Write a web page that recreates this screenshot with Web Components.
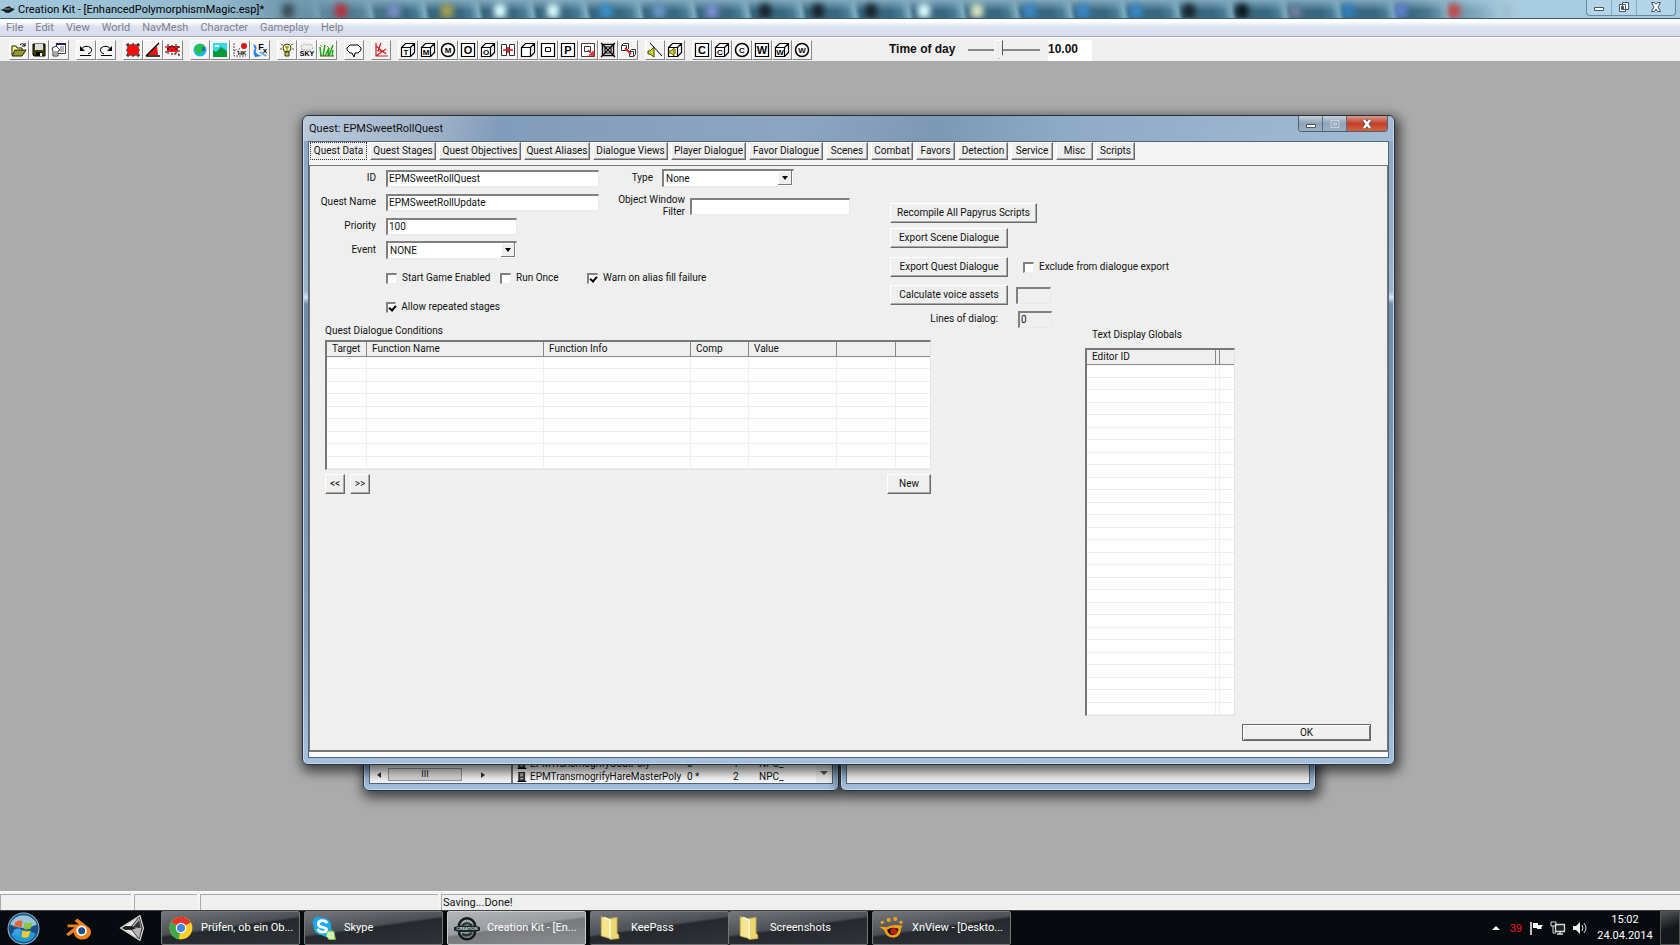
<!DOCTYPE html>
<html lang="en">
<head>
<meta charset="utf-8">
<title>Creation Kit - [EnhancedPolymorphismMagic.esp]*</title>
<style>
    html, body { height: 100%; }

    body {
        margin: 0;
        overflow: hidden;
        color: #111;
        --ui: Roboto, "Liberation Sans", Arial, sans-serif;
        --segoe: Roboto, "Noto Sans", sans-serif;
        font: 10px/12px var(--ui);
    }
</style>
</head>
<body>
<ck-app></ck-app>

<script>
// Shared by every element: builds the shadow root out of an HTML string.
class CkElement extends HTMLElement {
    constructor() {
        super()
        this.shadow = this.attachShadow({ mode: 'open' })
    }

    connectedCallback() {
        var template = document.createElement('template')
        template.innerHTML = '<style>*{box-sizing:border-box}</style>' + this.render()
        this.shadow.replaceChildren(template.content.cloneNode(true))
    }

    attr(name, fallback = '') {
        return this.getAttribute(name) ?? fallback
    }
}

// ---------------------------------------------------------------- icons

var letter = (char, x, y, size = 8) =>
    `<text x="${x}" y="${y}" font-size="${size}" font-weight="700" text-anchor="middle" fill="#000" stroke="none" font-family="Liberation Sans">${char}</text>`
var cube = (char = '') =>
    `<path d="M1.5 5.5h9v9h-9zM1.5 5.5l4-4h9v9l-4 4M10.5 5.5l4-4" fill="#fff" stroke="#000" stroke-width="1.2"/>${letter(char, 6, 13)}`
var box = (char) =>
    `<path d="M1.5 1.5h13v13h-13z" fill="#fff" stroke="#000" stroke-width="1.2"/>${letter(char, 8, 12, 11)}`
var ring = (char) =>
    `<circle cx="8" cy="8" r="6.5" fill="#fff" stroke="#000" stroke-width="1.5"/>${letter(char, 8, 11)}`

var icons = {
    open: '<path d="M1 13V4h4l1 2h5v2" fill="#ff9" stroke="#220"/><path d="M1 14l3-6h11l-4 6z" fill="#993" stroke="#220"/><path d="M9 3q3-3 5 1M14 1v3h-3" fill="none" stroke="#000"/>',
    save: '<path d="M2 2h12v12H3l-1-1z" fill="#440" stroke="#000"/><path d="M4 2h8v6H4z" fill="#ddd"/><path d="M5 10h6v4H5z" fill="#000"/><path d="M9 11h2v3H9z" fill="#eee"/>',
    props: '<path d="M5.5 1.500h9v10h-9z" fill="#fff" stroke="#444"/><path d="M5 1h10v2H5z" fill="#226"/><path d="M9 5h4M9 7h4M9 9h4" stroke="#666"/><path d="M1 6l4-2 4 4-2 1v5H2V9z" fill="#fff" stroke="#333"/><path d="M3 10h3M3 12h3" stroke="#555"/>',
    undo: '<path d="M3 7q5-5 10-1 2 4-3 6" fill="none" stroke="#000"/><path d="M2 4v5h5zM2 13h11v1H2z" fill="#000"/>',
    redo: '<path d="M13 7q-5-5-10-1-2 4 3 6" fill="none" stroke="#000"/><path d="M14 4v5H9zM3 13h11v1H3z" fill="#000"/>',
    snapGrid: '<path d="M3 1v14M8 1v14M13 1v14M1 3h14M1 8h14M1 13h14" stroke="#000"/><path d="M4 3h8l2 4-1 6H3L2 6z" fill="#f01010"/>',
    snapAngle: '<path d="M2 13L12 4l1 9z" fill="#f01010"/><path d="M1 14L14 1M1 14h14" stroke="#000" stroke-width="1.4"/>',
    snapRef: '<path d="M2 4h11v6H2z" fill="#f01818"/><path d="M0 5h16M3 2v12M7 3v11M11 2v12M14 4v10M0 10h4M9 12h5" stroke="#200" stroke-dasharray="2 2"/>',
    world: '<circle cx="8" cy="8" r="6.5" fill="#18b8d8"/><path d="M3 4q5-3 9-1l1 4-4 4-3 1-3-4z" fill="#28c040"/><path d="M10 5h3v4h-3z" fill="#3860c0"/>',
    land: '<path d="M1 1h14v14H1z" fill="#38d8e8"/><path d="M1 8l3 2 5-5 6 4v6H1z" fill="#089838"/><path d="M3 3h4v2H3z" fill="#fff"/>',
    havok: '<path d="M2 1v13h12M2 9l3-2M5 10l3-4" fill="none" stroke="#555" stroke-dasharray="2 1"/><circle cx="12" cy="4" r="3" fill="#d81818"/>' + letter('HK', 10, 13, 6),
    fx: '<path d="M1 2q5 2 3 6t6 6l-7 1q-3-6 0-8z" fill="#2080e8"/><path d="M8 10l6 4" stroke="#58a8f0" stroke-width="2"/>' + letter('F', 9, 8, 9) + letter('x', 13, 11, 8),
    light: '<circle cx="8" cy="6" r="4" fill="#ffffa0" stroke="#333"/><path d="M6 10h4v4H6z" fill="#cc3" stroke="#333"/><path d="M6 5h4M8 5v4M2 2l2 1M14 2l-2 1M1 7h2M13 7h2" stroke="#661"/>',
    sky: '<path d="M2 5q2-5 6-2 5-2 6 3l-2 2H3z" fill="#eee" stroke="#aaa" stroke-dasharray="2 1"/>' + letter('SKY', 8, 14, 7),
    grass: '<path d="M2 14L1 5M4 14L6 3M6 14l4-8M9 14l1-8M10 14l4-11M13 14l1-6" stroke="#18a818" stroke-width="1.5"/><path d="M1 14h14" stroke="#652"/><path d="M8 4l3 3M3 5l-2-2" stroke="#c83"/>',
    speech: '<path d="M4 3h8l3 3v2l-3 3H9l-1 4-2-4H4L1 8V6z" fill="#fff" stroke="#000"/>',
    graph: '<path d="M3 1v13h12M3 14L13 7M3 4l10 8M8 1l-3 8h6" fill="none" stroke="#c82020" stroke-width="1.2"/>',
    cubeT: cube('T'), cubeM: cube('M'), ringM: ring('M'), boxO: box('O'), cubeO: cube('O'),
    portalLink: '<path d="M1.500 2.500h5v11h-5zM9.500 2.500h5v11h-5z" fill="#fff" stroke="#333"/><path d="M3 8h10M8 5v6" stroke="#e01010" stroke-width="1.600"/>',
    cube: cube(),
    boxBox: '<path d="M1.500 1.500h13v13h-13z" fill="#fff" stroke="#000" stroke-width="1.200"/><path d="M5.500 5.500h5v4h-5z" fill="none" stroke="#000"/>',
    boxP: box('P'),
    boxRed: '<path d="M1.500 1.500h13v13h-13z" fill="#fff" stroke="#533"/><path d="M4.500 4.500h6v5h-6z" fill="none" stroke="#333"/><path d="M8 8l6 6M9 13h4V9" fill="none" stroke="#e02020" stroke-width="1.500"/>',
    boxX: '<path d="M2.500 2.500h11v11h-11z" fill="#fff" stroke="#000" stroke-width="1.500"/><path d="M1 1l14 14M15 1L1 15M5 5h6v6H5z" fill="none" stroke="#000" stroke-width="1.200"/><path d="M11 9l3 4" stroke="#c22"/>',
    linkCubes: '<path d="M1.500 3.500h5v5h-5zM1.500 3.500l2-2h5v5l-2 2M9.500 9.500h4v5h-4zM9.500 9.500l2-2h4v5l-2 2" fill="#fff" stroke="#333"/><path d="M5 6l6 6" stroke="#e02020" stroke-width="1.800"/>',
    sound: '<path d="M3 1l12 13" stroke="#000"/><path d="M1 9h2l4-4v10l-4-3H1z" fill="#d8d820" stroke="#440"/>',
    cubeSound: cube() + '<path d="M2 9h2l3-3v8l-3-3H2zM8 7v5" fill="#d8d820" stroke="#660"/>',
    boxC: box('C'), cubeC: cube('C'), ringC: ring('C'), boxW: box('W'), cubeW: cube('W'), ringW: ring('W'),

    kit: '<path d="M0 9l4-1 2-2 4-1 2 2 4 1-3 2-3 2H6l-2-2z" fill="#151a1c"/><path d="M5 8h6" stroke="#9bb"/>',
    list: '<path d="M2 0h11v16H2z" fill="#333"/><path d="M5 2h5v5H5zM5 9h5v3H5z" fill="#aaa"/><path d="M1 15h14" stroke="#000" stroke-width="2"/>',
    start: '<circle cx="16" cy="16" r="15" fill="#174f86" stroke="#8ab6cc"/><path d="M3 12a14 14 0 0 1 26 0q-13 7-26 0z" fill="#9cc4d8"/><path d="M4 21a13 13 0 0 0 24 0q-12-7-24 0z" fill="#1f9ad8"/><path d="M8 10q4-3 7-1l-1 6q-3-2-7 0z" fill="#e8602c"/><path d="M17 10q4 2 8 0l-2 6q-4 2-7 0z" fill="#8cc63c"/><path d="M7 17q4-2 7 0l-2 6q-3-2-7 0z" fill="#3aa0e8"/><path d="M15 18q4 2 8 0l-2 6q-4 2-7 0z" fill="#fcc82c"/>',
    blender: '<path d="M1 23l10-8H3v-3h13l-5-4 3-3 13 10q4 4 2 9-4 6-11 5-7-1-8-8l-6 4z" fill="#f0821e"/><circle cx="19" cy="19" r="6" fill="#fff"/><circle cx="19" cy="19" r="4" fill="#1c4f8c"/>',
    unity: '<path d="M3 16L25 2l4 14-4 14z" fill="#1a1a1a" stroke="#ddd" stroke-width="1.500"/><path d="M4 16l19-12-8 10h-7zM4 16l19 12-8-10h-7z" fill="#eee"/><path d="M16 14l8-10 3 12-3 12-8-10 5-2z" fill="#b4b4b4"/><path d="M8 14h8l-2 2 2 2H8z" fill="#222"/><path d="M17 15l7-8 2 9z" fill="#333"/>',
    chrome: '<circle cx="16" cy="16" r="14" fill="#fcd02c"/><path d="M16 16L4 9a14 14 0 0 1 24 0z" fill="#e0362c"/><path d="M16 16l-3 14A14 14 0 0 1 4 9z" fill="#3ea848"/><circle cx="16" cy="16" r="6.500" fill="#fff"/><circle cx="16" cy="16" r="5" fill="#4488e0"/>',
    skype: '<circle cx="14" cy="14" r="11" fill="#18aae8"/><circle cx="9" cy="9" r="7" fill="#18aae8"/><circle cx="19" cy="20" r="7" fill="#18aae8"/><path d="M20 10q-2-3-6-3-5 0-5 4 0 3 5 4t5 3q0 3-5 3-4 0-6-4" fill="none" stroke="#fff" stroke-width="3.500"/><path d="M20 20h8l2 10h-8l-3-4z" fill="#d6f0b0" stroke="#8c4"/>',
    creation: '<path d="M6 14a10 10 0 0 1 20 0M6 20a10 10 0 0 0 20 0" fill="none" stroke="#101818" stroke-width="3"/><path d="M10 13q6-6 12 0M10 23q6 4 12-1" fill="none" stroke="#243434" stroke-width="3"/><path d="M0 15l6-2h20l6 2v4l-6 2H6l-6-2z" fill="#1a2626"/><text x="16" y="19" font-size="5" font-weight="700" fill="#cfe0e0" text-anchor="middle" font-family="Liberation Sans">CREATION</text>',
    folder: '<path d="M6 3l10 3v22l-10-3z" fill="#f4e48c" stroke="#cdb050"/><path d="M16 5l8-1v18l2 2v4l-10 1z" fill="#ecd670" stroke="#c8a848"/><path d="M9 4l7 3v21" fill="none" stroke="#fffbd0" stroke-width="2"/>',
    xnview: '<path d="M0 14l9 1q8-4 20-2l-2 4q0 10-9 11-9 0-11-8-3-4-7-6z" fill="#f0a018"/><path d="M10 18q6-4 14-1-1 7-7 8-6-1-7-7z" fill="#200a06"/><circle cx="18" cy="20" r="4" fill="#b82414"/><circle cx="4" cy="9" r="2" fill="#f0a018"/><circle cx="12" cy="6" r="2.500" fill="#f0a018"/><circle cx="20" cy="5" r="2.500" fill="#f0a018"/><circle cx="27" cy="9" r="2" fill="#f0a018"/>',
    up: '<path d="M4 10l4-4 4 4z" fill="#fff"/>',
    flag: '<path d="M3 2v13" stroke="#fff" stroke-width="1.500"/><path d="M5 3h5v2h5l-2 3 1 1H9V8H5z" fill="#fff"/>',
    network: '<path d="M5.500 4.500h9v7h-9zM7 14h6M10 12v2" fill="#222" stroke="#ddd" stroke-width="1.300"/><path d="M1 2h5v4H1zM3 6v7h3" fill="none" stroke="#ddd"/>',
    volume: '<path d="M1 6h3l4-4v12l-4-4H1z" fill="#eee"/><path d="M10 5q2 3 0 6M12 3q4 5 0 10" fill="none" stroke="#ddd"/>',
}

class CkIcon extends CkElement {
    render() {
        var size = this.attr('box', '16')
        return `
<style>
    :host { display: block; flex: none; width: 16px; height: 16px; }
    svg { display: block; width: 100%; height: 100%; }
</style>
<svg viewBox="0 0 ${size} ${size}" aria-hidden="true">${icons[this.attr('name')]}</svg>`
    }
}

// ---------------------------------------------------------------- form controls

class CkButton extends CkElement {
    render() {
        return `
<style>
    :host { display: block; flex: none; }
    button {
        display: block;
        width: 100%;
        height: 20px;
        padding: 0;
        font: inherit;
        color: inherit;
        background: #efefef;
        border: 1px solid;
        border-color: #fff #696969 #696969 #fff;
        box-shadow: inset -1px -1px #a9a9a9;
        white-space: nowrap;
    }
    :host([default]) button { height: 17px; border: 1px solid #666; box-shadow: inset 1px 1px #fff, inset -1px -1px #777; }
    :host([tab]) button { height: 18px; }
    :host([selected]) button { border: 1px dotted #333; box-shadow: none; }
</style>
<button type="button"><slot></slot></button>`
    }
}

var sunken = `
    font: inherit;
    color: inherit;
    width: 100%;
    height: 17px;
    margin: 0;
    padding: 0 1px;
    background: #fff;
    border: solid;
    border-width: 2px 1px 1px 2px;
    border-color: #808080 #e8e8e8 #e8e8e8 #808080;
    border-radius: 0;
    outline: none;`

class CkField extends CkElement {
    render() {
        return `
<style>
    :host { display: flex; align-items: center; gap: 10px; height: 16px; }
    label { flex: none; width: var(--label, 66px); text-align: right; }
    div { position: relative; width: var(--control, 213px); }
    input, select { ${sunken} display: block; }
    select { appearance: none; height: 18px; padding-left: 2px; }
    input:read-only { background: #efefef; }
    /* drop-down button lies over the end of the select */
    i {
        position: absolute;
        inset: 2px 2px 2px auto;
        display: grid;
        place-items: center;
        width: 14px;
        background: #efefef;
        box-shadow: inset -1px -1px #777, inset 1px 1px #fff;
        pointer-events: none;
    }
    i::after { content: ""; border: 3px solid transparent; border-top: 4px solid #000; border-bottom: 0; }
</style>
<label for="control"><slot></slot></label>
<div>${this.control()}</div>`
    }

    control() {
        if (this.hasAttribute('select')) {
            return `<select id="control"><option>${this.attr('value')}</option></select><i></i>`
        }
        return `<input id="control" type="text" value="${this.attr('value')}" ${this.hasAttribute('readonly') ? 'readonly' : ''}>`
    }
}

class CkCheck extends CkElement {
    render() {
        return `
<style>
    :host { display: block; }
    label { display: flex; align-items: center; gap: 5px; white-space: nowrap; }
    input {
        appearance: none;
        display: grid;
        width: 11px;
        height: 11px;
        margin: 0;
        background: #fff;
        border: solid;
        border-width: 2px 1px 1px 2px;
        border-color: #808080 #eee #eee #808080;
    }
    input:checked::after {
        content: "";
        width: 3px;
        height: 5px;
        margin: 0 0 0 2px;
        border: solid #000;
        border-width: 0 2px 2px 0;
        rotate: 40deg;
    }
</style>
<label><input type="checkbox" ${this.hasAttribute('checked') ? 'checked' : ''}><slot></slot></label>`
    }
}

// columns="Title:width,Title:width" rows="n"
class CkList extends CkElement {
    render() {
        var columns = this.attr('columns').split(',').map((column) => column.split(':'))
        var cells = '<td></td>'.repeat(columns.length)
        return `
<style>
    :host { display: block; overflow: hidden; background: #fff; border: solid; border-width: 2px 1px 1px 2px; border-color: #777 #e4e4e4 #e4e4e4 #777; }
    table { width: 100%; height: 100%; table-layout: fixed; border-spacing: 0; }
    th {
        height: 15px;
        padding: 0 5px;
        font-weight: 400;
        text-align: left;
        white-space: nowrap;
        background: #efefef;
        border-right: 1px solid #888;
        border-bottom: 1px solid #888;
    }
    td { padding: 0; border-right: 1px solid #eee; border-bottom: 1px solid #eee; }
    th:last-child, td:last-child { border-right: 0; }
</style>
<table aria-label="${this.attr('label')}">
    <colgroup>${columns.map(([, width]) => `<col style="width:${width ? width + 'px' : 'auto'}">`).join('')}</colgroup>
    <thead><tr>${columns.map(([title]) => `<th>${title}</th>`).join('')}</tr></thead>
    <tbody>${`<tr>${cells}</tr>`.repeat(Number(this.attr('rows')))}</tbody>
</table>`
    }
}

// ---------------------------------------------------------------- windows

class CkWindow extends CkElement {
    render() {
        return `
<style>
    :host {
        display: flex;
        flex-direction: column;
        padding: 0 5px 6px;
        background: linear-gradient(#8ba5c2, #9cb4cc 27%, #d4e4f0 28%, #6f8cab 29%, #86a2c0 80%, #a4c0de);
        border: 1px solid #26323e;
        border-radius: 6px;
        box-shadow: inset 0 0 0 1px #c4d8ea, 2px 4px 12px 3px #0009;
    }
    header {
        display: flex;
        flex: none;
        height: 25px;
        justify-content: space-between;
        font: 11px/26px var(--segoe);
        margin: 0 -4px;
        padding-left: 5px;
        background: linear-gradient(100deg, #b9c9da, #a0b3c8 12%, #819cba 18%, #8ca6c2 45%, #7d98b5 58%, #8faac7 70%, #a3bcd4);
        border-radius: 5px 5px 0 0;
    }
    nav { display: flex; height: 16px; margin-right: 5px; border: 1px solid #4c5e70; border-top: 0; border-radius: 0 0 4px 4px; overflow: hidden; }
    button { display: grid; place-items: center; width: 24px; padding: 0; border: 0; border-right: 1px solid #5a6c7e; background: linear-gradient(#c5d2de, #8fa2b6 50%, #9fb2c5); }
    button:last-child { width: 40px; border: 0; background: linear-gradient(#d99a8c, #c0402c 50%, #d8603c); }
    svg { width: 12px; height: 10px; }
    main { flex: 1; min-height: 0; display: flex; flex-direction: column; background: #efefef; border: 1px solid #52667a; overflow: hidden; }
</style>
<header><span>${this.attr('caption')}</span>${this.hasAttribute('plain') ? '' : `<nav>
    <button aria-label="Minimize"><svg viewBox="0 0 12 10"><path d="M1.500 5.500h9v3h-9z" fill="#fff" stroke="#456"/></svg></button>
    <button aria-label="Maximize"><svg viewBox="0 0 12 10"><path d="M2 1.500h8v7H2zM4.500 4h3v2h-3z" fill="none" stroke="#c8d4e0"/></svg></button>
    <button aria-label="Close"><svg viewBox="0 0 12 10"><path d="M3 1l6 8M9 1L3 9" stroke="#545" stroke-width="4"/><path d="M3 1l6 8M9 1L3 9" stroke="#fff" stroke-width="2.500"/></svg></button>
</nav>`}</header>
<main><slot></slot></main>`
    }
}

class CkQuestForm extends CkElement {
    render() {
        var tabs = {
            'Quest Data': 57, 'Quest Stages': 66, 'Quest Objectives': 82, 'Quest Aliases': 66, 'Dialogue Views': 75,
            'Player Dialogue': 75, 'Favor Dialogue': 74, 'Scenes': 42, 'Combat': 42, 'Favors': 39, 'Detection': 50,
            'Service': 42, 'Misc': 37, 'Scripts': 39,
        }
        return `
<style>
    :host { display: flex; flex-direction: column; flex: 1; background: #fafafa; }
    .tabs { display: flex; gap: 3px; height: 23px; padding-left: 1px; background: #f4f4f4; }
    .panel { flex: 1; margin-bottom: 5px; padding: 4px 0; background: #efefef; border: 1px solid #777; border-width: 1px 1px 2px; }
    .top { display: flex; gap: 40px; height: 155px; }
    .columns { display: flex; gap: 16px; height: 102px; }
    .fields { display: grid; grid-auto-rows: 16px; gap: 8px; align-content: start; }
    .short { --control: 131px; }
    .side { --label: 40px; --control: 132px; display: flex; flex-direction: column; gap: 10px; }
    .side ck-field:first-child { gap: 9px; --label: 38px; }
    .filter { --label: 70px; --control: 160px; gap: 5px; height: 20px; }
    .checks { display: flex; margin-left: 76px; height: 29px; }
    .checks ck-check:nth-child(1) { width: 114px; }
    .checks ck-check:nth-child(2) { width: 87px; }
    .exports { display: grid; grid-template-rows: 25px 29px 28px 24px 20px; align-content: start; padding-top: 33px; }
    .exports > div { display: flex; align-items: center; height: 20px; }
    .exports ck-button { width: 118px; }
    .exports ck-button.wide { width: 147px; }
    .exports ck-check { margin-left: 15px; }
    .exports ck-field { --label: 0px; --control: 35px; gap: 8px; }
    .exports .lines { --label: 108px; --control: 34px; gap: 20px; }
    .lists { display: flex; gap: 154px; margin-left: 15px; }
    .conditions { width: 606px; }
    .conditions ck-list { height: 130px; margin: 3px 0 4px; }
    .nav { display: flex; gap: 5px; }
    .nav ck-button { width: 20px; }
    .nav ck-button:last-child { width: 44px; margin-left: auto; }
    .globals { width: 150px; padding-top: 4px; }
    .globals span { padding-left: 7px; }
    .globals ck-list { height: 368px; margin-top: 7px; }
    .ok { width: 129px; margin: 8px 16px 0 auto; }
</style>
<div class="tabs">
    ${Object.entries(tabs).map(([name, width], index) => `<ck-button tab ${index ? '' : 'selected'} style="width:${width}px">${name}</ck-button>`).join('')}
</div>
<div class="panel">
    <div class="top">
        <div>
            <div class="columns">
                <div class="fields">
                    <ck-field value="EPMSweetRollQuest">ID</ck-field>
                    <ck-field value="EPMSweetRollUpdate">Quest Name</ck-field>
                    <ck-field class="short" value="100">Priority</ck-field>
                    <ck-field class="short" select value="NONE">Event</ck-field>
                </div>
                <div class="side">
                    <ck-field select value="None">Type</ck-field>
                    <ck-field class="filter" value="">Object Window Filter</ck-field>
                </div>
            </div>
            <div class="checks">
                <ck-check>Start Game Enabled</ck-check>
                <ck-check>Run Once</ck-check>
                <ck-check checked>Warn on alias fill failure</ck-check>
            </div>
            <div class="checks"><ck-check checked>Allow repeated stages</ck-check></div>
        </div>
        <div class="exports">
            <div><ck-button class="wide">Recompile All Papyrus Scripts</ck-button></div>
            <div><ck-button>Export Scene Dialogue</ck-button></div>
            <div><ck-button>Export Quest Dialogue</ck-button><ck-check>Exclude from dialogue export</ck-check></div>
            <div><ck-button>Calculate voice assets</ck-button><ck-field readonly value=""></ck-field></div>
            <div><ck-field class="lines" readonly value="0">Lines of dialog:</ck-field></div>
        </div>
    </div>
    <div class="lists">
        <div class="conditions">
            <span>Quest Dialogue Conditions</span>
            <ck-list label="Quest Dialogue Conditions" rows="9" columns="Target:40,Function Name:177,Function Info:147,Comp:58,Value:88,:59,:"></ck-list>
            <div class="nav">
                <ck-button>&lt;&lt;</ck-button>
                <ck-button>&gt;&gt;</ck-button>
                <ck-button>New</ck-button>
            </div>
        </div>
        <div class="globals">
            <span>Text Display Globals</span>
            <ck-list label="Text Display Globals" rows="28" columns="Editor ID:129,:4,:"></ck-list>
        </div>
    </div>
    <ck-button class="ok" default>OK</ck-button>
</div>`
    }
}

// Tail of the object window that shows under the quest dialog.
class CkObjectList extends CkElement {
    render() {
        return `
<style>
    :host { display: flex; align-items: flex-end; flex: 1; background: #f4f4f4; }
    .scroll { display: flex; flex: none; align-items: center; gap: 7px; width: 141px; height: 17px; padding-left: 7px; }
    .scroll i { border: 3px solid transparent; border-right: 4px solid #333; border-left: 0; }
    .scroll i:last-child { rotate: 180deg; margin-left: 12px; }
    .thumb { width: 74px; height: 13px; background: linear-gradient(#eee, #d4d4d4); border: 1px solid #999; font: 9px/10px var(--ui); text-align: center; }
    table { flex: 1; table-layout: fixed; border-spacing: 0; background: #fafafa; border-left: 2px solid #777; padding-left: 4px; }
    td { height: 13px; padding: 0; white-space: nowrap; }
    ck-icon { width: 10px; height: 12px; }
    td:nth-child(1) { width: 13px; }
    td:nth-child(2) { width: 157px; }
    td:nth-child(3) { width: 46px; }
    td:nth-child(4) { width: 26px; }
    .end { display: grid; flex: none; place-items: center; width: 16px; height: 20px; background: #eee; }
    .end i { border: 4px solid transparent; border-top-color: #555; border-bottom: 0; }
</style>
<div class="scroll"><i></i><div class="thumb">III</div><i></i></div>
<table>
    <tr><td><ck-icon name="list"></ck-icon></td><td>EPMTransmogrifyGoatPoly</td><td>0 *</td><td>1</td><td>NPC_</td></tr>
    <tr><td><ck-icon name="list"></ck-icon></td><td>EPMTransmogrifyHareMasterPoly</td><td>0 *</td><td>2</td><td>NPC_</td></tr>
</table>
<div class="end"><i></i></div>`
    }
}

// ---------------------------------------------------------------- application bars

class CkTitlebar extends CkElement {
    render() {
        // tab icons of the browser behind the glass
        var blobs = ['#3a4c56', '#b8303c', '#7c90c8', '#a8a050', '#dff', '#dff', '#3a90c8', '#6a98c8', '#7c90d0', '#18222a',
            '#18222a', '#18222a', '#dff', '#dde8c0', '#3a88c8', '#3a88c8', '#3a88c8', '#18222a', '#081418', '#7080a0',
            '#3080c0', '#6080d0', '#c84848', '#a0c0d0']
        return `
<style>
    :host {
        position: relative;
        display: flex;
        align-items: center;
        flex: none;
        height: 19px;
        overflow: hidden;
        font: 11px/19px var(--segoe);
        background: linear-gradient(90deg, #a4c8dc, #94bace 13%, #7098ae 17%, transparent 24% 84%, #a8cce0 90%),
            linear-gradient(#80a8bc, transparent 60%),
            repeating-linear-gradient(80deg, #386880 0 30px, #487c94 40px, #7cacc0 48px, #386880 53px);
        border-bottom: 1px solid #405a68;
    }
    ck-icon { width: 15px; }
    span { padding-left: 3px; color: #000; }
    /* lies behind the caption, across the whole bar */
    .blobs { position: absolute; inset: 4px 0 0 282px; display: flex; gap: 41px; filter: blur(3px); }
    .blobs i { flex: none; width: 12px; height: 14px; border-radius: 4px; }
    nav { position: relative; display: flex; height: 16px; margin: 0 4px 3px auto; border: 1px solid #6888a0; border-top: 0; border-radius: 0 0 4px 4px; background: #b4d4e8; }
    button { display: grid; place-items: center; width: 25px; padding: 0; border: 0; border-right: 1px solid #88a8bc; background: none; }
    button:last-child { width: 38px; border: 0; }
    svg { width: 12px; height: 12px; }
    path { fill: #fff; stroke: #456; }
</style>
<div class="blobs">${blobs.map((color) => `<i style="background:${color}"></i>`).join('')}</div>
<ck-icon name="kit"></ck-icon>
<span>Creation Kit - [EnhancedPolymorphismMagic.esp]*</span>
<nav>
    <button aria-label="Minimize"><svg viewBox="0 0 12 12"><path d="M1.500 6.500h9v3h-9z"/></svg></button>
    <button aria-label="Restore"><svg viewBox="0 0 12 12"><path d="M4.500 1.500h6v7h-6zM1.500 3.500h6v7h-6zM3.500 5.500h2v3h-2z"/></svg></button>
    <button aria-label="Close"><svg viewBox="0 0 12 12"><path d="M1.500 1.500h3l1.500 2 1.500-2h3L8 6l2.500 4.500h-3L6 8l-1.500 2.500h-3L4 6z"/></svg></button>
</nav>`
    }
}

class CkMenubar extends CkElement {
    render() {
        var items = ['File', 'Edit', 'View', 'World', 'NavMesh', 'Character', 'Gameplay', 'Help']
        return `
<style>
    :host { display: block; flex: none; }
    nav { display: flex; gap: 12px; height: 18px; padding: 0 6px; background: linear-gradient(#fff 15%, #dde2f2 45%, #d6dcee); border-bottom: 1px solid #aaa; }
    button { padding: 0; border: 0; background: none; font: 11px/17px var(--segoe); color: #808088; }
</style>
<nav>${items.map((item) => `<button>${item}</button>`).join('')}</nav>`
    }
}

class CkToolbar extends CkElement {
    render() {
        var groups = [
            'open save props', 'undo redo', 'snapGrid snapAngle snapRef', 'world land havok fx', 'light sky grass', 'speech', 'graph',
            'cubeT cubeM ringM boxO cubeO portalLink cube boxBox boxP boxRed boxX linkCubes', 'sound cubeSound',
            'boxC cubeC ringC boxW cubeW ringW',
        ]
        return `
<style>
    :host { display: flex; flex: none; gap: 7px; height: 24px; padding: 2px 9px 0; background: #efefef; border-top: 1px solid #fff; box-sizing: border-box; }
    .group { display: flex; }
    button { display: grid; place-items: center; width: 20px; height: 20px; padding: 0; background: #f4f4f4; border: 1px solid; border-color: #fff #888 #888 #fff; }
    .time { display: flex; margin-left: 70px; font: 700 12px/18px "Liberation Sans", sans-serif; }
    label { width: 79px; }
    input { appearance: none; width: 72px; height: 19px; margin: 0; background: linear-gradient(#888 0 0) center / 100% 2px no-repeat; }
    input::-webkit-slider-thumb {
        appearance: none;
        width: 9px;
        height: 19px;
        background: #efefef;
        border: 1px solid;
        border-color: #fff #555 #888 #fff;
        clip-path: polygon(0 0, 100% 0, 100% 75%, 50% 100%, 0 75%);
    }
    output { width: 44px; margin-left: 8px; background: #fff; }
</style>
${groups.map((group) => `<div class="group">${group.split(' ').map((name) => `<button aria-label="${name}"><ck-icon name="${name}"></ck-icon></button>`).join('')}</div>`).join('')}
<div class="time">
    <label for="time">Time of day</label>
    <input id="time" type="range" min="0" max="24" step="1" value="10">
    <output for="time">10.00</output>
</div>`
    }
}

class CkStatusbar extends CkElement {
    render() {
        return `
<style>
    :host { display: flex; flex: none; gap: 3px; height: 19px; padding-top: 2px; background: #f4f4f4; border-top: 1px solid #fff; box-sizing: border-box; font: 11px/15px var(--segoe); }
    div { background: #efefef; border: solid #aaa; border-width: 1px 0 0 1px; padding-left: 1px; }
    div:nth-of-type(1) { width: 131px; }
    div:nth-of-type(2) { width: 63px; }
    div:nth-of-type(3) { width: 238px; }
    div:nth-of-type(4) { flex: 1; }
</style>
<div></div><div></div><div></div><div>Saving...Done!</div>`
    }
}

class CkTask extends CkElement {
    render() {
        return `
<style>
    :host { display: block; width: 139px; }
    button {
        display: flex;
        align-items: center;
        gap: 7px;
        width: 100%;
        height: 34px;
        padding: 0 6px;
        font: 11px/16px var(--segoe);
        color: #fff;
        white-space: nowrap;
        border: 1px solid #777;
        border-radius: 2px;
        background: linear-gradient(172deg, #74787c, #4c5055 45%, #25282c 50%, #303338);
    }
    :host([active]) button { border-color: #ccc; background: linear-gradient(172deg, #b4b6b8, #9a9da0 45%, #77797c 50%, #8c8e90); }
    :host([folder]) button { gap: 15px; border-left-width: 0; }
    ck-icon { width: 26px; height: 26px; }
    :host([folder]) ck-icon { width: 28px; height: 30px; margin-right: -8px; }
</style>
<button><ck-icon name="${this.attr('icon')}" box="32"></ck-icon><slot></slot></button>`
    }
}

class CkTaskbar extends CkElement {
    render() {
        return `
<style>
    :host { display: flex; align-items: center; flex: none; height: 35px; gap: 4px; background: #070b10; border-top: 1px solid #3c4248; box-sizing: border-box; color: #fff; font: 11px/16px var(--segoe); }
    a { display: grid; place-items: center; width: 27px; }
    .launch { display: flex; gap: 26px; width: 157px; padding-left: 7px; }
    .launch a:first-child { width: 32px; }
    .launch ck-icon { width: 28px; height: 28px; }
    .launch a:first-child ck-icon { width: 33px; height: 33px; }
    .pair { display: flex; }
    .tray { display: flex; align-items: center; gap: 6px; margin-left: auto; }
    .tray b { font: 11px/16px "Liberation Sans"; color: #f01818; }
    time { width: 62px; text-align: center; }
    .desktop { width: 20px; height: 34px; padding: 0; border: 1px solid #555; background: linear-gradient(160deg, #555, #14181c 50%); }
</style>
<div class="launch">
    <a href="#start" aria-label="Start"><ck-icon name="start" box="32"></ck-icon></a>
    <a href="#blender" aria-label="Blender"><ck-icon name="blender" box="32"></ck-icon></a>
    <a href="#unity" aria-label="Unity"><ck-icon name="unity" box="32"></ck-icon></a>
</div>
<ck-task icon="chrome">Prüfen, ob ein Ob...</ck-task>
<ck-task icon="skype">Skype</ck-task>
<ck-task icon="creation" active>Creation Kit - [En...</ck-task>
<div class="pair">
    <ck-task icon="folder" folder>KeePass</ck-task>
    <ck-task icon="folder" folder>Screenshots</ck-task>
</div>
<ck-task icon="xnview">XnView - [Deskto...</ck-task>
<div class="tray">
    <ck-icon name="up"></ck-icon>
    <b>39</b>
    <ck-icon name="flag"></ck-icon>
    <ck-icon name="network"></ck-icon>
    <ck-icon name="volume"></ck-icon>
    <time datetime="2014-04-24T15:02">15:02<br>24.04.2014</time>
</div>
<button class="desktop" aria-label="Show desktop"></button>`
    }
}

class CkApp extends CkElement {
    render() {
        return `
<style>
    :host { display: flex; flex-direction: column; height: 100vh; }
    .desktop { position: relative; flex: 1; overflow: hidden; background: #ababab; }
    /* free-floating windows */
    ck-window { position: absolute; }
    .objects { left: 363px; top: 589px; width: 476px; height: 141px; }
    .cells { left: 840px; top: 589px; width: 476px; height: 141px; }
    .quest { left: 302px; top: 54px; width: 1093px; height: 650px; }
</style>
<ck-titlebar></ck-titlebar>
<ck-menubar></ck-menubar>
<ck-toolbar></ck-toolbar>
<div class="desktop">
    <ck-window class="objects" plain><ck-object-list></ck-object-list></ck-window>
    <ck-window class="cells" plain></ck-window>
    <ck-window class="quest" caption="Quest: EPMSweetRollQuest"><ck-quest-form></ck-quest-form></ck-window>
</div>
<ck-statusbar></ck-statusbar>
<ck-taskbar></ck-taskbar>`
    }
}

window.customElements.define('ck-icon', CkIcon)
window.customElements.define('ck-button', CkButton)
window.customElements.define('ck-field', CkField)
window.customElements.define('ck-check', CkCheck)
window.customElements.define('ck-list', CkList)
window.customElements.define('ck-window', CkWindow)
window.customElements.define('ck-quest-form', CkQuestForm)
window.customElements.define('ck-object-list', CkObjectList)
window.customElements.define('ck-titlebar', CkTitlebar)
window.customElements.define('ck-menubar', CkMenubar)
window.customElements.define('ck-toolbar', CkToolbar)
window.customElements.define('ck-statusbar', CkStatusbar)
window.customElements.define('ck-task', CkTask)
window.customElements.define('ck-taskbar', CkTaskbar)
window.customElements.define('ck-app', CkApp)
</script>
</body>
</html>
